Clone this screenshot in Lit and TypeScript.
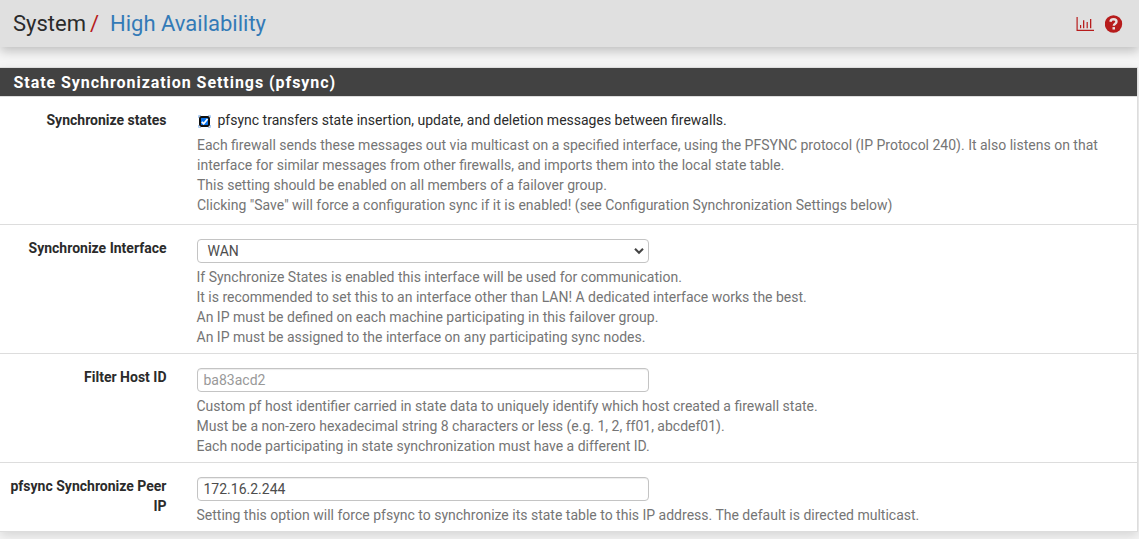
import { LitElement, html, css, svg, nothing } from "lit";
import { customElement } from "lit/decorators.js";

type Row = { label: string[]; control: "check" | "select" | "placeholder" | "value"; text: string; help: string[] };

const ROWS: Row[] = [
  {
    label: ["Synchronize states"],
    control: "check",
    text: "pfsync transfers state insertion, update, and deletion messages between firewalls.",
    help: [
      "Each firewall sends these messages out via multicast on a specified interface, using the PFSYNC protocol (IP Protocol 240). It also listens on that",
      "interface for similar messages from other firewalls, and imports them into the local state table.",
      "This setting should be enabled on all members of a failover group.",
      'Clicking "Save" will force a configuration sync if it is enabled! (see Configuration Synchronization Settings below)',
    ],
  },
  {
    label: ["Synchronize Interface"],
    control: "select",
    text: "WAN",
    help: [
      "If Synchronize States is enabled this interface will be used for communication.",
      "It is recommended to set this to an interface other than LAN! A dedicated interface works the best.",
      "An IP must be defined on each machine participating in this failover group.",
      "An IP must be assigned to the interface on any participating sync nodes.",
    ],
  },
  {
    label: ["Filter Host ID"],
    control: "placeholder",
    text: "ba83acd2",
    help: [
      "Custom pf host identifier carried in state data to uniquely identify which host created a firewall state.",
      "Must be a non-zero hexadecimal string 8 characters or less (e.g. 1, 2, ff01, abcdef01).",
      "Each node participating in state synchronization must have a different ID.",
    ],
  },
  {
    label: ["pfsync Synchronize Peer", "IP"],
    control: "value",
    text: "172.16.2.244",
    help: ["Setting this option will force pfsync to synchronize its state table to this IP address. The default is directed multicast."],
  },
];

@customElement("app-root")
export class AppRoot extends LitElement {
  static styles = css`
    :host {
      display: block;
      box-sizing: border-box;
      height: 539px;
      overflow: hidden;
      background: #f5f5f5;
      color: #2b2b2b;
      font: 14px/20px Roboto, sans-serif;
    }
    * { box-sizing: border-box; }
    .header {
      display: flex;
      align-items: center;
      height: 47px;
      padding: 0 16px 0 13px;
      background: #e0e0e0;
      box-shadow: 0 4px 10px rgba(0, 0, 0, 0.22);
      font-size: 22px;
      line-height: 47px;
      white-space: pre;
    }
    .slash { color: #b71c1c; margin: 0 11px 0 4px; }
    .link { color: #337ab7; flex: 1; }
    .icons { display: flex; align-items: center; gap: 10px; padding-top: 1px; }
    .icons svg { display: block; }
    .panel {
      width: 1138px;
      margin-top: 20px;
      background: #fff;
      border: 1px solid #ddd;
      border-left: 0;
      box-shadow: 0 4px 10px rgba(0, 0, 0, 0.12);
    }
    .title {
      height: 28px;
      padding: 1px 0 0 13.5px;
      background: #424242;
      color: #fff;
      font-size: 16px;
      font-weight: 700;
      line-height: 28px;
      letter-spacing: 0.95px;
    }
    .row {
      display: grid;
      grid-template-columns: 166.5px 1fr;
      column-gap: 30px;
      border-top: 1px solid #ddd;
      padding: 13px 0 6px;
    }
    .row.check { padding-bottom: 9px; }
    .label { text-align: right; font-weight: 700; white-space: nowrap; }
    .body { padding-top: 1px; }
    .check .body { padding-top: 0; }
    .help { margin-top: 4px; color: #757575; white-space: nowrap; }
    .check .help { margin-top: 5px; padding-left: 0.5px; }
    .checkline { display: flex; align-items: center; gap: 7px; padding-left: 1px; white-space: nowrap; }
    .checkline svg { margin-top: 2px; }
    .field {
      display: flex;
      align-items: center;
      justify-content: space-between;
      width: 452px;
      height: 24px;
      padding: 0 4px 0 6px;
      border: 1px solid #c4c4c4;
      border-radius: 4px;
      box-shadow: inset 0 1px 1px rgba(0, 0, 0, 0.075);
      color: #4d4d4d;
    }
    .field.select { padding-left: 10px; box-shadow: none; }
    .field.placeholder { color: #999; }
  `;

  private control(r: Row) {
    if (r.control === "check") {
      return html`<div class="checkline">
        <svg width="13" height="13" viewBox="0 0 13 13">
          <path d="M.5 3V.5h2.5M10 .5h2.5V3M12.5 10v2.5H10M3 12.5H.5V10" fill="none" stroke="#a9cdf7" />
          <rect x="2" y="2" width="9" height="9" rx="1.4" fill="#0b73ea" stroke="#101010" stroke-width="2" />
          <path d="M3.8 6.8l1.9 1.9 3.8-4.7" fill="none" stroke="#fff" stroke-width="1.8" />
        </svg>
        <span>${r.text}</span>
      </div>`;
    }
    return html`<div class="field ${r.control}">
      <span>${r.text}</span>
      ${r.control === "select"
        ? html`<svg width="10" height="8" viewBox="0 0 10 8"><path d="M1 1.8l4 3.9 4-3.9" fill="none" stroke="#444" stroke-width="2.1" /></svg>`
        : nothing}
    </div>`;
  }

  render() {
    return html`
      <div class="header">
        <span>System</span><span class="slash">/</span><span class="link">High Availability</span>
        <div class="icons">
          <svg width="19" height="15" viewBox="0 0 19 15" fill="#b71c1c">
            ${svg`<path d="M.5 0h1.2v12.8H18V14H.5zM4 8h1.2v3.2H4zM7 3.2h1.3v8H7zM10.6 5h1.2v6.2h-1.2zM14 2h1.3v9.2H14z"/>`}
          </svg>
          <svg width="18" height="18" viewBox="0 0 18 18">
            <circle cx="8.5" cy="9" r="8.7" fill="#b71c1c" />
            <path d="M5.4 6.7C5.7 4.9 6.9 4.3 8.5 4.3c1.8 0 3 1 3 2.4 0 2-2.7 2-2.7 4" fill="none" stroke="#e8e0e0" stroke-width="2.4" />
            <rect x="7.5" y="12.1" width="2.5" height="2.4" fill="#e8e0e0" />
          </svg>
        </div>
      </div>
      <div class="panel">
        <div class="title">State Synchronization Settings (pfsync)</div>
        ${ROWS.map(
          (r) => html`<div class="row ${r.control === "check" ? "check" : ""}">
            <div class="label">${r.label.map((l) => html`<div>${l}</div>`)}</div>
            <div class="body">
              ${this.control(r)}
              <div class="help">${r.help.map((h) => html`<div>${h}</div>`)}</div>
            </div>
          </div>`
        )}
      </div>
    `;
  }
}
